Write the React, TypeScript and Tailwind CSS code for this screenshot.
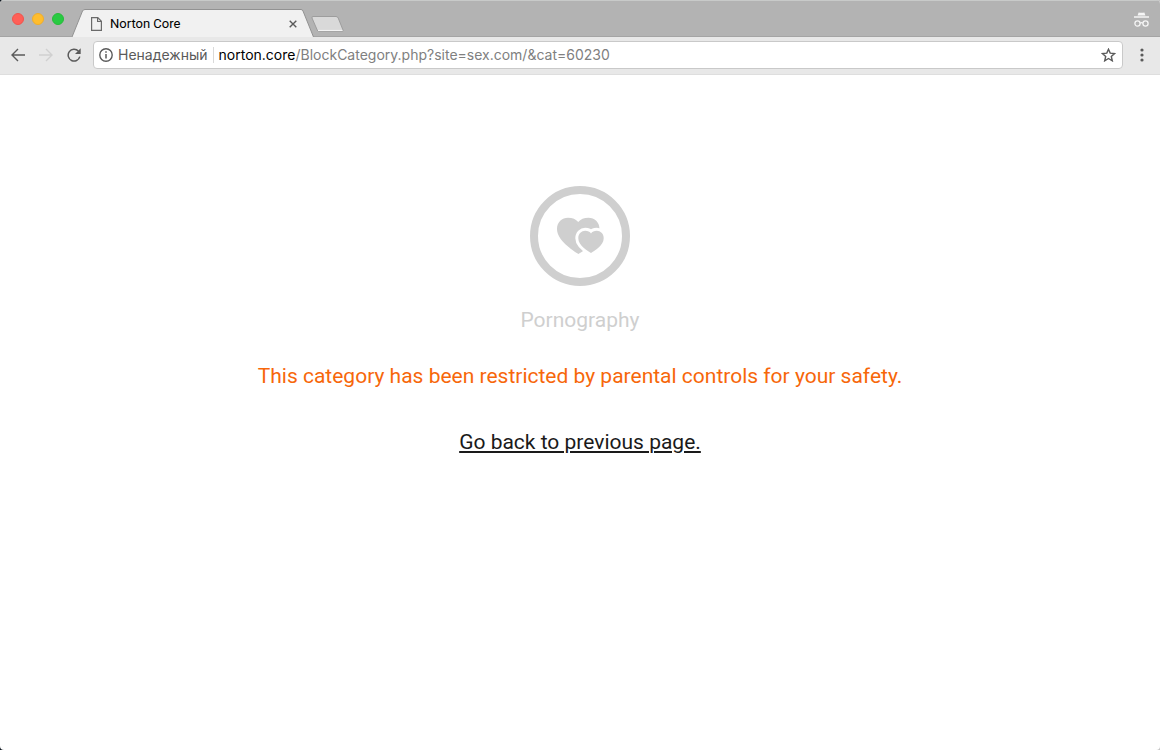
import { useState } from 'react'

const WindowButtons = () => {
    return (
        <div className="flex gap-2 pl-3 pt-3">
            <button aria-label="Close window" className="h-3 w-3 rounded-full border border-[#f0544c] bg-[#ff5f57]" />
            <button aria-label="Minimize window" className="h-3 w-3 rounded-full border border-[#efae2b] bg-[#ffbd2e]" />
            <button aria-label="Zoom window" className="h-3 w-3 rounded-full border border-[#27bb39] bg-[#28ca42]" />
        </div>
    )
}

const Tab = () => {
    return (
        <div className="mt-2 ml-2 flex h-7">
            <svg className="block" width="13" height="28" viewBox="0 0 13 28">
                <path d="M0 28 L10.5 2 Q11.3 .5 13 .5 V28Z" fill="#f1f1f1" />
                <path d="M0 28 L10.5 2 Q11.3 .5 13 .5" fill="none" stroke="#929292" />
            </svg>
            <div className="flex w-[216px] items-center border-t border-[#929292] bg-[#f1f1f1] pl-[6px]">
                <svg width="11" height="14" viewBox="0 0 11 14" fill="none" stroke="#6a6a6a" strokeWidth="1.2">
                    <path d="M.6 .7 H6.8 L10.4 4.3 V13.3 H.6Z" />
                    <path d="M6.6 .9 V4.5 H10.2" />
                </svg>
                <span className="ml-2 flex-1 text-[13px] leading-4 text-black">Norton Core</span>
                <button aria-label="Close tab" className="p-1">
                    <svg width="8" height="8" viewBox="0 0 8 8" stroke="#5a5a5a" strokeWidth="1.4">
                        <path d="M.7 .7 L7.3 7.3 M7.3 .7 L.7 7.3" />
                    </svg>
                </button>
            </div>
            <svg className="block" width="13" height="28" viewBox="0 0 13 28">
                <path d="M0 .5 Q1.4 .5 2 2 L12.5 28 H0Z" fill="#f1f1f1" />
                <path d="M0 .5 Q1.4 .5 2 2 L12.5 28" fill="none" stroke="#929292" />
            </svg>
        </div>
    )
}

const TabStrip = () => {
    return (
        <header className="flex h-[37px] border-t border-[#c8cac9] bg-[#b3b3b3] shadow-[inset_0_-1px_0_#a4a4a4]">
            <WindowButtons />
            <Tab />
            <button aria-label="New tab" className="-ml-[3px] mt-[15px] self-start">
                <svg className="block" width="33" height="17" viewBox="0 0 33 17">
                    <path d="M2 .5 H25 Q26.5 .5 27.2 2 L32 14 Q32.5 15.5 31 15.5 H8 Q6.8 15.5 6.2 14 L1 2 Q.6 .5 2 .5Z" fill="#d9d9d9" stroke="#9d9d9d" />
                    <path d="M7 14.5 H31.5" stroke="#f2f2f2" strokeWidth="1.2" />
                </svg>
            </button>
            <div className="ml-auto pr-[11px] pt-[11px]">
                <svg width="15" height="16" viewBox="0 0 15 16" fill="none" stroke="#f5f5f5">
                    <path d="M4.6 .5 Q7.5 1.2 10.4 .5 L11.4 3.4 H3.6Z" fill="#f5f5f5" stroke="none" />
                    <path d="M0 5 H15" strokeWidth="1.6" />
                    <circle cx="3.5" cy="11.5" r="2.6" strokeWidth="1.3" />
                    <circle cx="11.5" cy="11.5" r="2.6" strokeWidth="1.3" />
                    <path d="M6 11.2 Q7.5 10.2 9 11.2" strokeWidth="1.2" />
                </svg>
            </div>
        </header>
    )
}

const Toolbar = () => {
    const [path, setPath] = useState('/BlockCategory.php?site=sex.com/&cat=60230')

    return (
        <nav className="flex h-[38px] items-center border-b border-[#dedede] bg-[#e8e8e8] pb-px pl-[11px] pr-4">
            <button aria-label="Back">
                <svg width="14" height="14" viewBox="0 0 14 14" fill="none" stroke="#5a5a5a" strokeWidth="1.4">
                    <path d="M14 7 H1.5 M7 1 L1 7 L7 13" />
                </svg>
            </button>
            <button aria-label="Forward" className="ml-[14px]">
                <svg width="14" height="14" viewBox="0 0 14 14" fill="none" stroke="#d0d0d0" strokeWidth="1.4">
                    <path d="M0 7 H12.5 M7 1 L13 7 L7 13" />
                </svg>
            </button>
            <button aria-label="Reload" className="ml-[14px]">
                <svg width="14" height="14" viewBox="0 0 14 14">
                    <path d="M11.4 3.1 A5.9 5.9 0 1 0 12.8 8.6" fill="none" stroke="#5a5a5a" strokeWidth="1.5" />
                    <path d="M13.7 .3 V6 H8Z" fill="#5a5a5a" />
                </svg>
            </button>
            <div className="ml-3 flex h-7 flex-1 items-center rounded-[4px] border border-[#c9c9c9] bg-white pl-[5px] pr-[6px] font-[Inter,sans-serif] text-sm">
                <svg width="14" height="14" viewBox="0 0 14 14" fill="none" stroke="#5a5a5a" strokeWidth="1.4">
                    <circle cx="7" cy="7" r="6.2" />
                    <path d="M7 6 V10.5 M7 3.3 V4.8" strokeWidth="1.5" />
                </svg>
                <span className="ml-[5px] text-[#5a5a5a]">Ненадежный</span>
                <span className="mx-[5px] h-4 w-px bg-[#d9d9d9]" />
                <label htmlFor="address" className="text-black">norton.core</label>
                <input
                    id="address"
                    className="min-w-0 flex-1 bg-transparent text-[#808080] outline-none"
                    type="text" value={path} onChange={(e) => setPath(e.target.value)} />
                <button aria-label="Bookmark this page">
                    <svg width="15" height="14" viewBox="0 0 15 14" fill="none" stroke="#5a5a5a" strokeWidth="1.4">
                        <path d="M7.5 1.2 L9.2 5.1 L13.6 5.5 L10.3 8.4 L11.3 12.8 L7.5 10.5 L3.7 12.8 L4.7 8.4 L1.4 5.5 L5.8 5.1Z" />
                    </svg>
                </button>
            </div>
            <button aria-label="Menu" className="ml-[17px]">
                <svg width="4" height="14" viewBox="0 0 4 14" fill="#5a5a5a">
                    <circle cx="2" cy="2" r="1.6" />
                    <circle cx="2" cy="7" r="1.6" />
                    <circle cx="2" cy="12" r="1.6" />
                </svg>
            </button>
        </nav>
    )
}

const HeartsIcon = () => {
    const small = 'M61 67 C57.5 64.8 48.3 59.5 48.3 52.2 C48.3 47.6 51.6 44.8 55.2 44.8 C57.8 44.8 59.9 45.8 61 47.5 C62.1 45.8 64.2 44.8 66.8 44.8 C70.4 44.8 73.7 47.6 73.7 52.2 C73.7 59.5 64.5 64.8 61 67Z'
    return (
        <svg width="100" height="100" viewBox="0 0 100 100" fill="#cfcfcf">
            <circle cx="50" cy="50" r="46" fill="none" stroke="#cfcfcf" strokeWidth="8" />
            <path d="M48.5 68 C43 64.5 27 54.5 27 43 C27 36 32 31.7 38 31.7 C42.5 31.7 46 33.2 48.2 36 C50.5 33.2 54 31.7 58.5 31.7 C64.5 31.7 69.5 36 69.5 43 C69.5 54.5 54 64.5 48.5 68Z" />
            <path d={small} stroke="#fff" strokeWidth="6" />
            <path d={small} />
        </svg>
    )
}

const App = () => {
    return (
        <div className="flex min-h-screen flex-col bg-[linear-gradient(to_right,#101820,#c4c4c4)] font-[Roboto,'Noto_Sans',sans-serif]">
            <div className="flex flex-1 flex-col overflow-hidden rounded-[4px] bg-white">
                <TabStrip />
                <Toolbar />
                <main className="flex flex-col items-center px-4 pt-[111px] text-center text-[21px] leading-7">
                    <HeartsIcon />
                    <h1 className="mt-5 text-[#cfcfcf]">Pornography</h1>
                    <p className="mt-7 text-[#f7670a]">This category has been restricted by parental controls for your safety.</p>
                    <a href="#back" className="mt-[38px] text-[#1a1a1a] underline decoration-2 underline-offset-2">Go back to previous page.</a>
                </main>
            </div>
        </div>
    )
}

export default App
